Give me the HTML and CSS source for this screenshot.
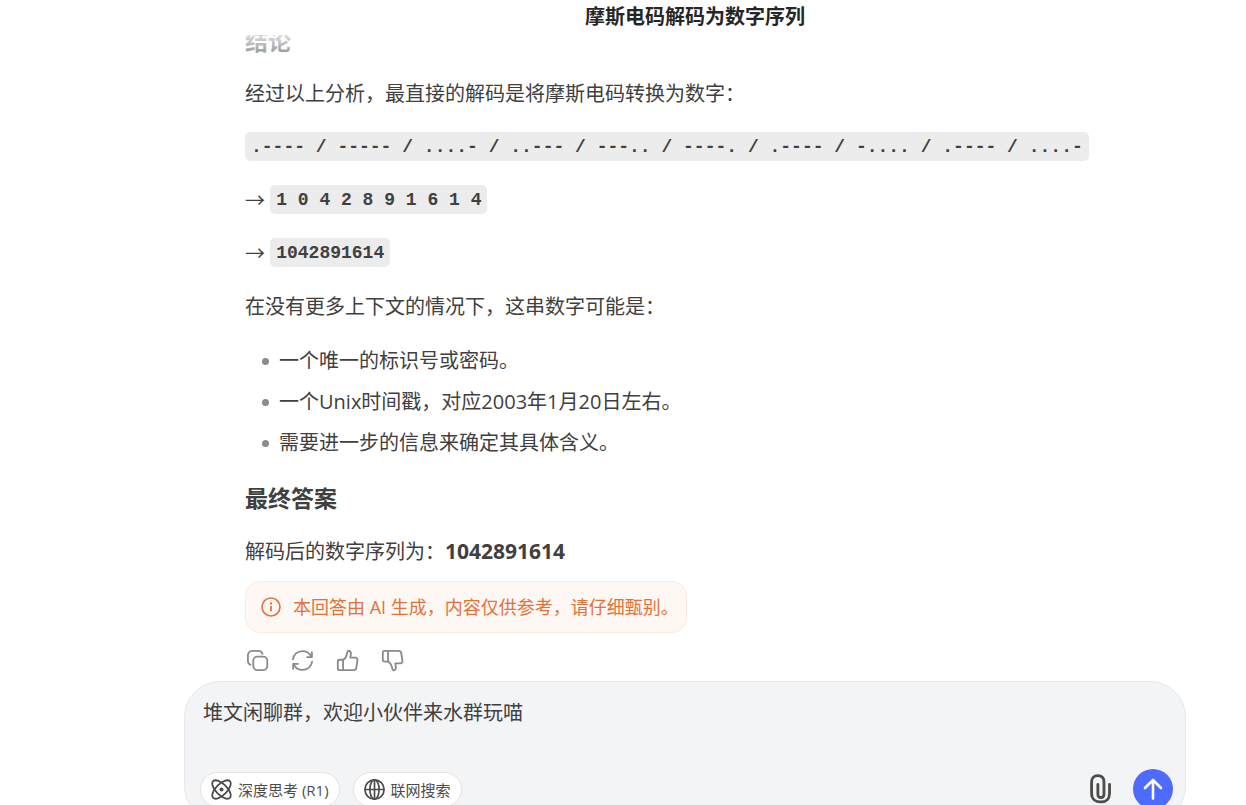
FILE: index.html
```html
<!DOCTYPE html>
<html lang="zh-CN">
<head>
<meta charset="utf-8">
<meta name="viewport" content="width=device-width, initial-scale=1">
<title>摩斯电码解码为数字序列</title>
<link rel="stylesheet" href="styles.css">
</head>
<body>
<header class="topbar"><h1 class="topbar-title">摩斯电码解码为数字序列</h1></header>
<main class="chat">
  <article class="message">
    <h3 class="heading">结论</h3>
    <p class="para">经过以上分析，最直接的解码是将摩斯电码转换为数字：</p>
    <p class="para para-code"><code class="code">.---- / ----- / ....- / ..--- / ---.. / ----. / .---- / -.... / .---- / ....-</code></p>
    <p class="para para-code">→ <code class="code">1 0 4 2 8 9 1 6 1 4</code></p>
    <p class="para para-code">→ <code class="code">1042891614</code></p>
    <p class="para">在没有更多上下文的情况下，这串数字可能是：</p>
    <ul class="list">
      <li class="item">一个唯一的标识号或密码。</li>
      <li class="item">一个Unix时间戳，对应2003年1月20日左右。</li>
      <li class="item">需要进一步的信息来确定其具体含义。</li>
    </ul>
    <h3 class="heading">最终答案</h3>
    <p class="para para-last">解码后的数字序列为：<strong class="answer">1042891614</strong></p>
    <div class="notice">
      <svg class="notice-icon" viewBox="0 0 20 20" fill="none" stroke="currentColor" stroke-width="1.6" aria-hidden="true"><circle cx="10" cy="10" r="9"/><path d="M10 9v5.2" stroke-width="1.8"/><path d="M10 5.4v2" stroke-width="2"/></svg>
      <span>本回答由 AI 生成，内容仅供参考，请仔细甄别。</span>
    </div>
    <div class="actions">
      <button class="action" type="button" aria-label="复制">
        <svg viewBox="0 0 24 24" fill="none" stroke="currentColor" stroke-width="1.9" stroke-linecap="round"><rect x="7.6" y="8" width="14.6" height="14" rx="4.2"/><path d="M4.6 16.6C2.900 15.800 2 14.500 2 12.600V6.600C2 3.900 3.900 2 6.600 2h6c2.200 0 3.900 1.100 4.600 3"/></svg>
      </button>
      <button class="action" type="button" aria-label="重新生成">
        <svg viewBox="0 0 24 24" fill="none" stroke="currentColor" stroke-width="1.9" stroke-linecap="round" stroke-linejoin="round"><path d="M2 10.800C2.600 5.800 6.800 2.200 12 2.200c3.900 0 7.300 2.100 9 5.600"/><path d="M21.800 3.400v5h-5"/><path d="M22 13.200c-.6 5-4.800 8.600-10 8.600-3.900 0-7.300-2.100-9-5.600"/><path d="M2.200 20.600v-5h5"/></svg>
      </button>
      <button class="action" type="button" aria-label="喜欢">
        <svg viewBox="0 0 24 24" fill="none" stroke="currentColor" stroke-width="1.9" stroke-linejoin="round"><path d="M7.400 11.200H3.600c-1 0-1.700.7-1.700 1.700v7.400c0 1 .7 1.700 1.700 1.700h3.800z"/><path d="M7.400 11.400c2.300-1.300 3.400-3.500 4-6.200l.5-2c.3-1.300 1.100-1.700 2-1.200 1.500.8 1.900 2.100 1.600 3.800l-.6 3.200h5.300c1.500 0 2.400 1 2.200 2.500l-1.200 8c-.2 1.500-1.300 2.500-2.800 2.500h-11"/></svg>
      </button>
      <button class="action" type="button" aria-label="不喜欢">
        <svg viewBox="0 0 24 24" fill="none" stroke="currentColor" stroke-width="1.9" stroke-linejoin="round"><path d="M7.400 13.200H3.600c-1 0-1.700-.7-1.700-1.700V3.700C1.900 2.700 2.600 2 3.600 2h3.800z"/><path d="M7.400 13c2.300 1.200 3.400 3.300 4 5.900l.5 2c.3 1.300 1.100 1.700 2 1.200 1.500-.8 1.900-2.100 1.600-3.800l-.6-3.300h5.300c1.500 0 2.400-1 2.200-2.500l-1.200-8C21 3 19.900 2 18.400 2h-11"/></svg>
      </button>
    </div>
  </article>
</main>
<footer class="dock">
  <form class="composer">
    <textarea class="prompt" rows="2" aria-label="输入消息">堆文闲聊群，欢迎小伙伴来水群玩喵</textarea>
    <div class="toolbar">
      <button class="chip" type="button">
        <svg class="chip-icon" viewBox="0 0 21 21" fill="none" stroke="currentColor" stroke-width="1.8" aria-hidden="true"><ellipse cx="10.500" cy="10.500" rx="11.800" ry="5.500" transform="rotate(45 10.500 10.500)"/><ellipse cx="10.500" cy="10.500" rx="11.800" ry="5.500" transform="rotate(-45 10.500 10.500)"/><circle cx="10.500" cy="10.500" r="2" fill="currentColor" stroke="none"/></svg>
        深度思考 (R1)
      </button>
      <button class="chip" type="button">
        <svg class="chip-icon" viewBox="0 0 21 21" fill="none" stroke="currentColor" stroke-width="1.7" aria-hidden="true"><circle cx="10.500" cy="10.500" r="9.600"/><ellipse cx="10.500" cy="10.500" rx="4.600" ry="9.600"/><path d="M1 10.500h19M10.500 1v19"/></svg>
        联网搜索
      </button>
      <button class="attach" type="button" aria-label="添加附件">
        <svg viewBox="0 0 20 28" fill="none" stroke="currentColor" stroke-width="2.700" stroke-linecap="round"><path d="M18.600 10v8.500c0 5-3.200 8.100-8.300 8.100s-8.800-3.100-8.800-8.100V7.800c0-3.900 2.100-6.200 5.900-6.200s5.900 2.300 5.900 6.200v11.500c0 2-1 3.100-2.900 3.100s-2.900-1.100-2.900-3.100V10"/></svg>
      </button>
      <button class="send" type="submit" aria-label="发送">
        <svg viewBox="0 0 20 22" fill="none" stroke="currentColor" stroke-width="2.600" stroke-linecap="round" stroke-linejoin="round"><path d="M10 20.500V2M2 10l8-8 8 8"/></svg>
      </button>
    </div>
  </form>
</footer>
</body>
</html>
```

FILE: styles.css
```css
* {
  box-sizing: border-box;
}

body {
  display: flex;
  flex-direction: column;
  height: 100vh;
  margin: 0;
  overflow: hidden;
  background: #fff;
  color: #404040;
  font-family: "Open Sans", "Noto Sans CJK SC", sans-serif;
  font-size: 20px;
  line-height: 36px;
}

button,
textarea {
  border: 0;
  padding: 0;
  background: none;
  color: inherit;
  font-family: inherit;
}

button {
  cursor: pointer;
}

.topbar {
  flex: none;
  padding: 0 0 1px 144px;
  text-align: center;
}

.topbar-title {
  margin: 0;
  color: #262626;
  font-size: 20px;
  line-height: 34px;
}

.chat {
  position: relative;
  display: flex;
  flex: 1;
  flex-direction: column;
  justify-content: flex-end;
  min-height: 0;
  padding: 0 100px 9px 245px;
  overflow: hidden;
}

.chat::before {
  content: "";
  position: absolute;
  inset: 0 0 auto;
  height: 44px;
  background: linear-gradient(#ffffffd0, #ffffff00);
}

.heading {
  margin: 0 0 18px;
  font-size: 23px;
  line-height: 34px;
}

.para {
  margin: 0 0 18px;
}

.para-code {
  line-height: 35px;
}

.para-last {
  margin-bottom: 11px;
}

.code {
  display: inline-block;
  padding: 2px 6px 0;
  border-radius: 5px;
  background: #ececec;
  font-family: "Liberation Mono", monospace;
  font-size: 18px;
  font-weight: 700;
  line-height: 27px;
  vertical-align: 3px;
  white-space: nowrap;
}

.list {
  display: flex;
  flex-direction: column;
  gap: 5px;
  margin: 0 0 20px;
  padding: 0 0 0 17px;
  list-style: none;
}

.item {
  display: flex;
  align-items: center;
  gap: 10px;
}

.item::before {
  content: "";
  width: 7px;
  height: 7px;
  border-radius: 50%;
  background: #8b8b8b;
}

.answer {
  font-size: 21px;
}

.notice {
  display: flex;
  align-items: center;
  gap: 12px;
  width: fit-content;
  padding: 7px 7px 7px 15px;
  border: 1px solid #fce9e0;
  border-radius: 15px;
  background: #fef8f4;
  color: #e4713a;
  font-size: 18px;
}

.notice-icon {
  width: 20px;
  height: 20px;
}

.actions {
  display: flex;
  gap: 22px;
  margin: 16px 0 0 1px;
}

.action {
  width: 23px;
  height: 23px;
  color: #8b8b8b;
}

.action svg,
.attach svg,
.send svg {
  display: block;
  width: 100%;
}

.dock {
  flex: none;
  margin-bottom: -17px;
  padding: 0 60px 0 184px;
}

.composer {
  display: flex;
  flex-direction: column;
  gap: 8px;
  padding: 15px 12px 12px 15px;
  border: 1px solid #e4e7ed;
  border-radius: 36px;
  background: #f3f4f6;
}

.prompt {
  display: block;
  width: 100%;
  padding: 0 3px;
  resize: none;
  outline: 0;
  font-size: 20px;
  line-height: 32px;
}

.toolbar {
  display: flex;
  align-items: center;
}

.chip {
  display: flex;
  align-items: center;
  gap: 6px;
  height: 35px;
  margin-right: 13px;
  padding: 0 10px;
  border: 1px solid #e2e3e5;
  border-radius: 18px;
  background: #fff;
  color: #4c4c4c;
  font-size: 15px;
}

.chip-icon {
  width: 21px;
  height: 21px;
}

.attach {
  width: 21px;
  margin: 0 22px 0 auto;
  color: #4c4c4c;
}

.send {
  width: 40px;
  height: 40px;
  padding: 0 10px;
  border-radius: 50%;
  background: #4d6bfe;
  color: #fff;
}
```
